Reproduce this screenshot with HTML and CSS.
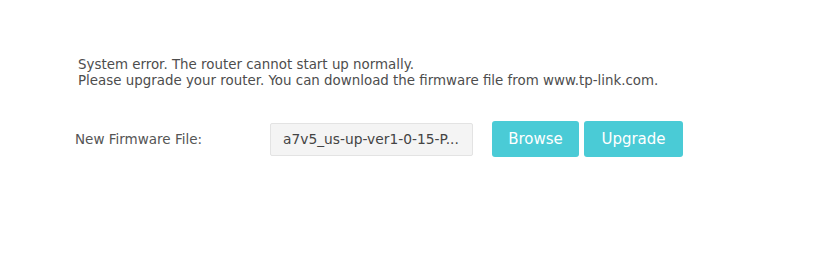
FILE: index.html
```html
<!DOCTYPE html>
<html>
<head>
<meta charset="utf-8">
<link rel="stylesheet" href="styles.css">
</head>
<body>
<div class="page">
  <div class="message">
    <p>System error. The router cannot start up normally.</p>
    <p>Please upgrade your router. You can download the firmware file from www.tp-link.com.</p>
  </div>
  <div class="row">
    <label class="label">New Firmware File:</label>
    <div class="file">a7v5_us-up-ver1-0-15-P...</div>
    <div class="buttons">
      <button class="btn btn-browse">Browse</button>
      <button class="btn btn-upgrade">Upgrade</button>
    </div>
  </div>
</div>
</body>
</html>
```
FILE: styles.css
```css
html, body {
  margin: 0;
  padding: 0;
  background: #fff;
}
body {
  font-family: "DejaVu Sans", Verdana, sans-serif;
  font-size: 13.4px;
  color: #4d4d4d;
}
.page {
  padding: 57px 0 0 78px;
}
.message p {
  margin: 0;
  line-height: 16px;
}
.row {
  display: flex;
  align-items: center;
  margin-top: 32px;
  margin-left: -3px;
}
.label {
  width: 195px;
  font-size: 13.5px;
  color: #555;
}
.file {
  box-sizing: border-box;
  width: 203px;
  height: 33px;
  background: #f4f4f4;
  border: 1px solid #e3e3e3;
  border-radius: 2px;
  padding: 0 12px;
  line-height: 31px;
  font-size: 13.8px;
  color: #444;
  white-space: nowrap;
  overflow: hidden;
}
.buttons {
  display: flex;
  gap: 5px;
  margin-left: 19px;
}
.btn {
  box-sizing: border-box;
  height: 36px;
  border: none;
  border-radius: 3px;
  background: #4acbd6;
  color: #fff;
  font-family: "DejaVu Sans", Verdana, sans-serif;
  font-size: 15px;
  padding: 0;
  cursor: pointer;
}
.btn-browse {
  width: 87px;
}
.btn-upgrade {
  width: 99px;
}
```
